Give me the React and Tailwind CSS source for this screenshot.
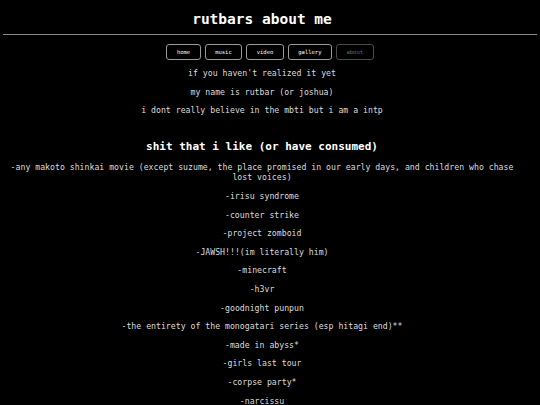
const links = ['home', 'music', 'video', 'gallery', 'about']

const likes = [
  '-any makoto shinkai movie (except suzume, the place promised in our early days, and children who chase lost voices)',
  '-irisu syndrome',
  '-counter strike',
  '-project zomboid',
  '-JAWSH!!!(im literally him)',
  '-minecraft',
  '-h3vr',
  '-goodnight punpun',
  '-the entirety of the monogatari series (esp hitagi end)**',
  '-made in abyss*',
  '-girls last tour',
  '-corpse party*',
  '-narcissu',
]

export default function App() {
  return (
    <div
      className="min-h-screen bg-black text-[#dcdcdc] text-center overflow-hidden"
      style={{ fontFamily: '"DejaVu Sans Mono", "Liberation Mono", monospace' }}
    >
      {/* titulo */}
      <header className="pt-[10px] pr-[16px]">
        <h1 className="text-[14.5px] leading-[18px] font-bold text-white">rutbars about me</h1>
      </header>
      <div className="mx-[3px] mt-[6px] border-t border-[#8a8a8a]"></div>

      {/* nav */}
      <nav className="flex justify-center gap-[4px] mt-[9px]">
        {links.map((l) => (
          <a
            key={l}
            href="#"
            className={
              l === 'about'
                ? 'h-[16px] px-[9.5px] flex items-center rounded-[3px] border border-[#4a4a4a] text-[#6a6a6a] text-[5.5px]'
                : 'h-[16px] px-[9.5px] flex items-center rounded-[3px] border border-[#9a9a9a] text-white text-[5.5px]'
            }
          >
            {l}
          </a>
        ))}
      </nav>

      <main className="px-[8px] pr-[24px] text-[8.2px] leading-[10.6px]">
        <div className="flex flex-col gap-[8px] mt-[8px]">
          <p>if you haven't realized it yet</p>
          <p>my name is rutbar (or joshua)</p>
          <p>i dont really believe in the mbti but i am a intp</p>
        </div>

        <h2 className="text-[11px] leading-[13px] font-bold text-white mt-[24px]">
          shit that i like (or have consumed)
        </h2>

        <div className="flex flex-col gap-[8px] mt-[9px] -mx-[4px]">
          {likes.map((item) => (
            <p key={item}>{item}</p>
          ))}
        </div>
      </main>
    </div>
  )
}
